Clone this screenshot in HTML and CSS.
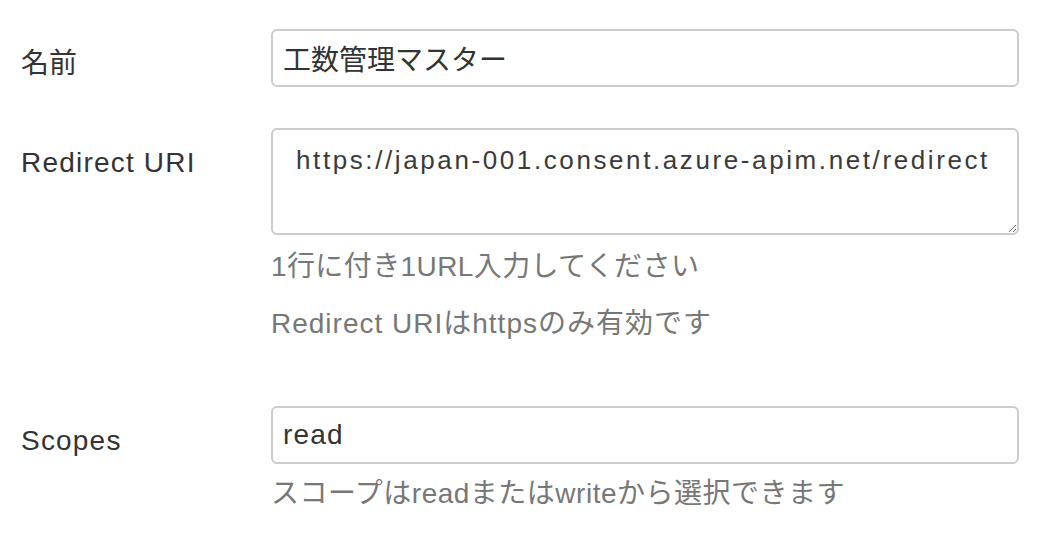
FILE: index.html
```html
<!DOCTYPE html>
<html lang="ja">
<head>
<meta charset="utf-8">
<link rel="stylesheet" href="styles.css">
</head>
<body>
<form class="form">
  <div class="row row-name">
    <label class="label">名前</label>
    <div class="field">
      <input class="control" type="text" value="工数管理マスター">
    </div>
  </div>
  <div class="row row-uri">
    <label class="label latin">Redirect URI</label>
    <div class="field">
      <textarea class="control area">https://japan-001.consent.azure-apim.net/redirect</textarea>
      <p class="help help-first">1行に付き1URL入力してください</p>
      <p class="help help-second">Redirect URIはhttpsのみ有効です</p>
    </div>
  </div>
  <div class="row row-scope">
    <label class="label latin">Scopes</label>
    <div class="field">
      <input class="control latin" type="text" value="read">
      <p class="help help-scope">スコープはreadまたはwriteから選択できます</p>
    </div>
  </div>
</form>
</body>
</html>
```

FILE: styles.css
```css
html, body {
  margin: 0;
  padding: 0;
  background: #fff;
}
body {
  font-family: "Liberation Sans", "Noto Sans CJK JP", sans-serif;
  font-size: 28px;
  color: #333;
}
.form {
  padding: 29px 19px 0 21px;
}
.row {
  display: grid;
  grid-template-columns: 250px 1fr;
  align-items: start;
}
.row-uri { margin-top: 41px; }
.row-scope { margin-top: 62px; }
.label {
  padding-top: 17px;
  line-height: 36px;
  color: #333;
}
.latin {
  letter-spacing: 1.2px;
}
.field {
  display: flex;
  flex-direction: column;
}
.control {
  box-sizing: border-box;
  width: 100%;
  height: 58px;
  margin: 0;
  border: 2px solid #ccc;
  border-radius: 6px;
  padding: 0 10px;
  font-family: "Liberation Sans", "Noto Sans CJK JP", sans-serif;
  font-size: 28px;
  color: #333;
  background: #fff;
  outline: none;
}
.area {
  height: 107px;
  padding: 11px 23px;
  font-size: 26px;
  letter-spacing: 2.6px;
  line-height: 38px;
  color: #3a3a3a;
  resize: vertical;
}
.help {
  margin: 0;
  color: #777;
  line-height: 40px;
}
.help-first { margin-top: 12px; letter-spacing: 0.4px; }
.help-second { margin-top: 17px; letter-spacing: 1px; }
.help-scope { margin-top: 10px; letter-spacing: 0.5px; }
```
